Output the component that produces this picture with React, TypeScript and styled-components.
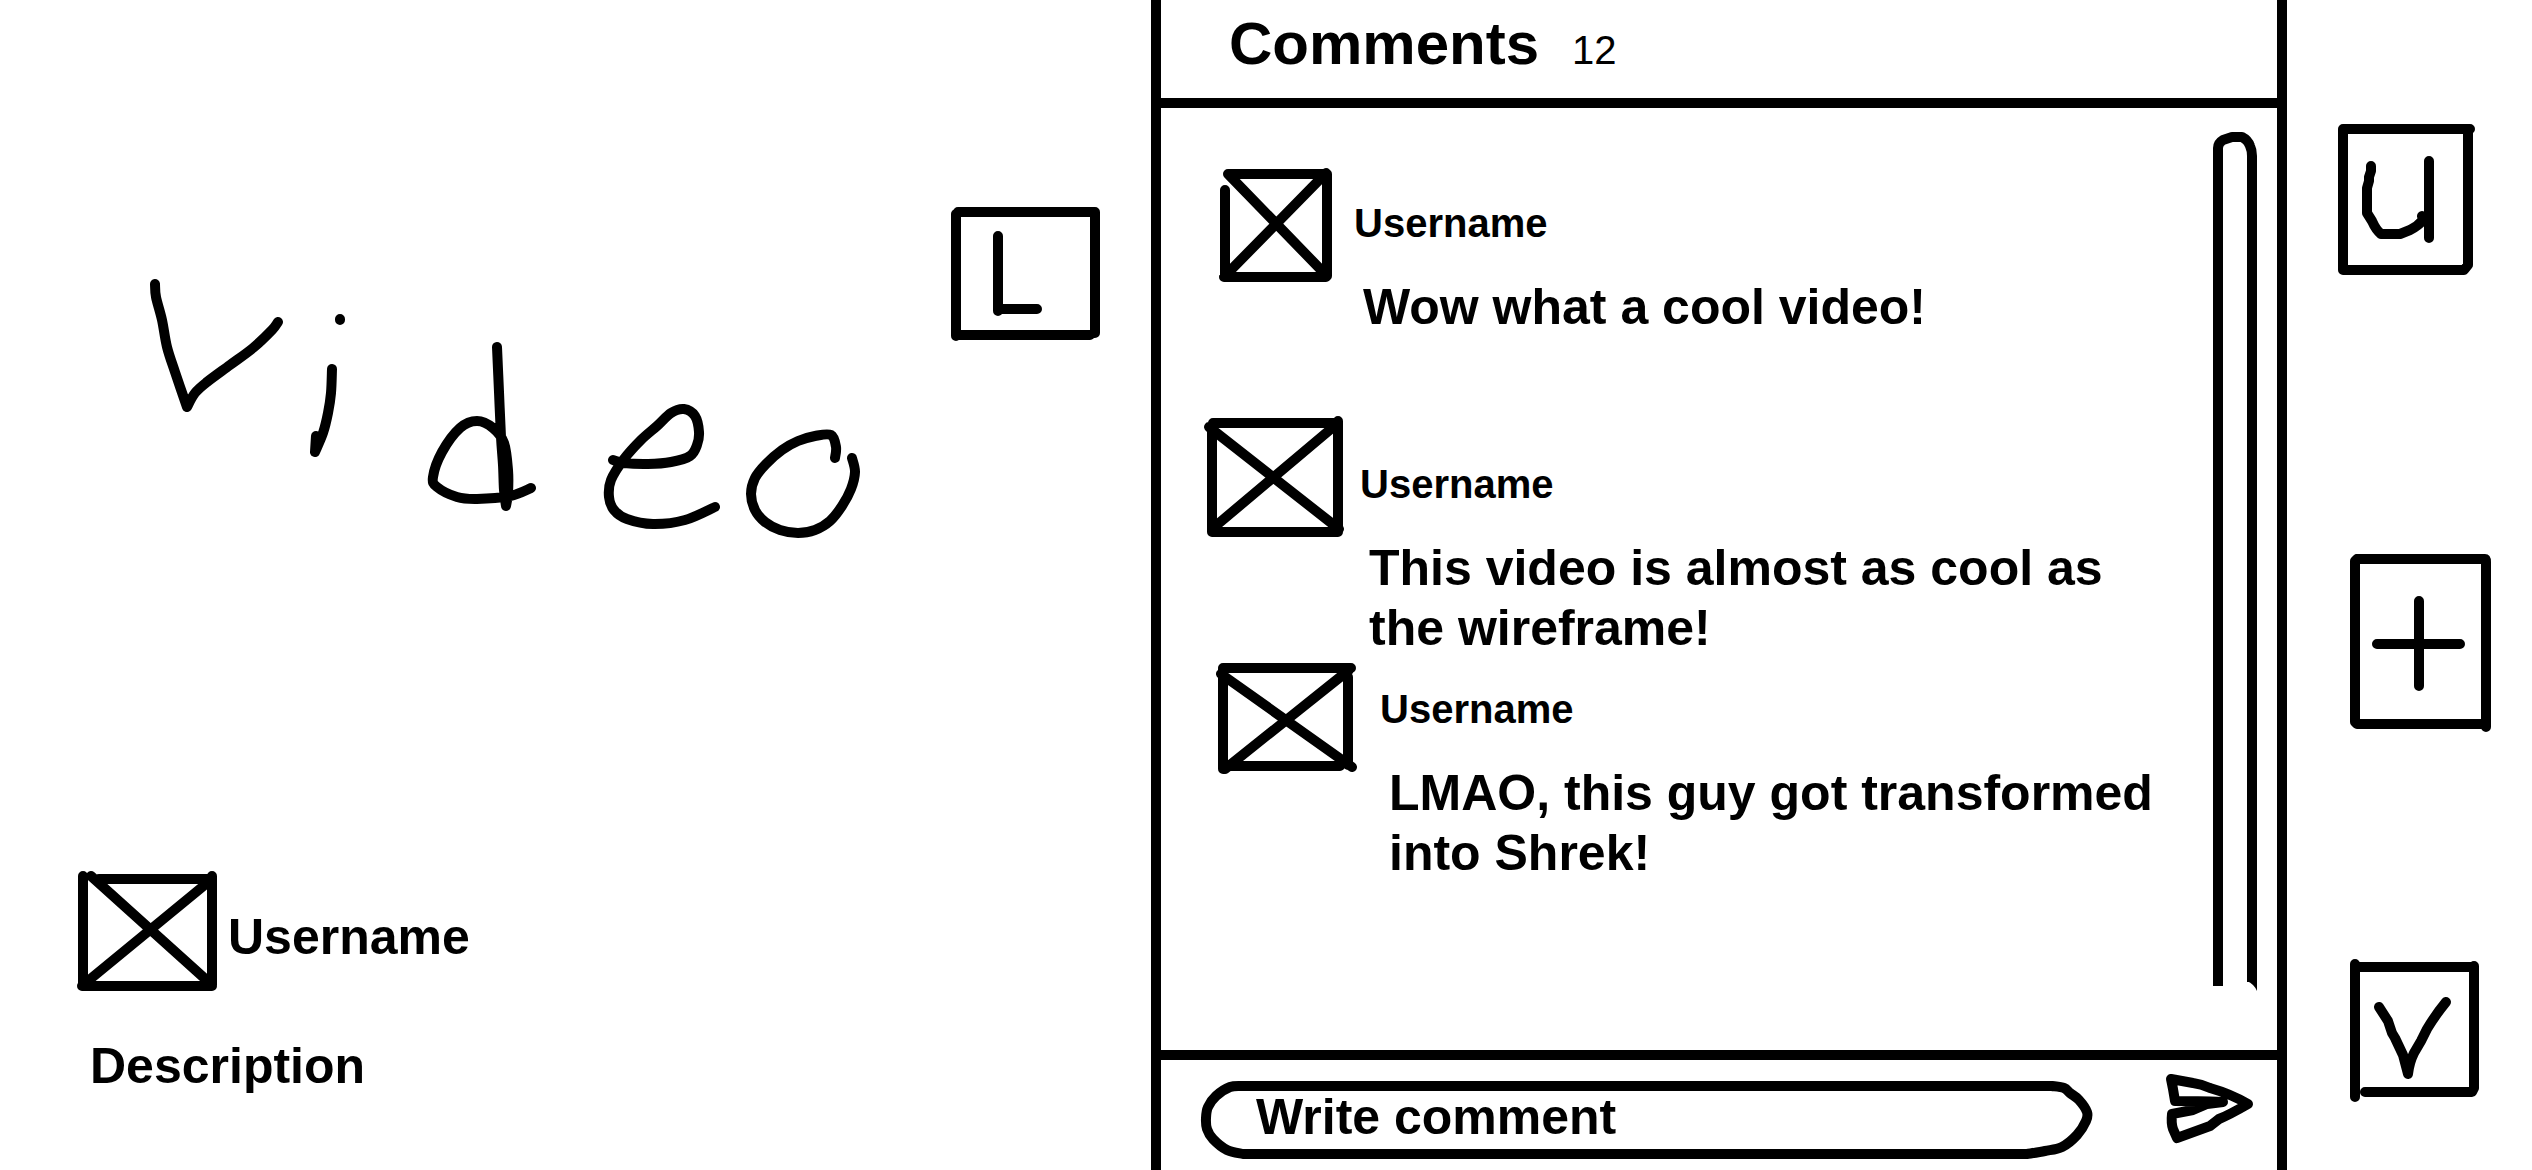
import React from "react";
import styled, { createGlobalStyle } from "styled-components";

const INK = "#000000";
const PAPER = "#ffffff";

const GlobalStyle = createGlobalStyle`
  *, *::before, *::after { box-sizing: border-box; }
  body {
    margin: 0;
    background: ${PAPER};
    color: ${INK};
    font-family: "Liberation Sans", Arial, Helvetica, sans-serif;
  }
`;

/* ---------- layout ---------- */

const Page = styled.div`
  display: grid;
  grid-template-columns: minmax(0, 1151fr) minmax(0, 1136fr) minmax(0, 245fr);
  min-height: 100vh;
`;

const Stage = styled.main`
  display: flex;
  flex-direction: column;
  justify-content: space-between;
  padding: 207px 50px 74px 77px;
`;

const StageTop = styled.div`
  display: flex;
  align-items: flex-start;
  justify-content: space-between;
  padding-left: 43px;
`;

const Wordmark = styled.h1`
  margin: 43px 0 0;
  line-height: 0;
`;

const Author = styled.div`
  display: flex;
  align-items: flex-start;
  gap: 9px;
`;

const AuthorName = styled.div`
  padding-top: 37px;
  font-size: 50px;
  line-height: 60px;
  font-weight: 700;
`;

const Description = styled.p`
  margin: 44px 0 0;
  padding-left: 13px;
  font-size: 50px;
  line-height: 60px;
  font-weight: 700;
`;

const Panel = styled.section`
  display: flex;
  flex-direction: column;
  border: solid ${INK};
  border-width: 0 10px;
`;

const PanelHeader = styled.header`
  display: flex;
  align-items: baseline;
  gap: 33px;
  padding: 9px 68px 19px;
  border-bottom: 10px solid ${INK};
`;

const PanelTitle = styled.h2`
  margin: 0;
  font-size: 60px;
  line-height: 70px;
  font-weight: 700;
`;

const Count = styled.span`
  font-size: 40px;
  line-height: 46px;
`;

const PanelBody = styled.div`
  display: flex;
  flex: 1;
  padding: 0 19px 0 43px;
`;

const CommentList = styled.ul`
  flex: 1;
  display: flex;
  flex-direction: column;
  gap: 4px;
  margin: 0;
  padding: 60px 40px 0 0;
  list-style: none;
`;

const CommentItem = styled.li<{ $indent: number }>`
  display: flex;
  align-items: flex-start;
  gap: 16px;
  min-height: 243px;
  padding-left: ${(p) => p.$indent}px;
`;

const CommentBody = styled.div<{ $drop: number }>`
  flex: 1;
  padding-top: ${(p) => p.$drop}px;
`;

const CommentAuthor = styled.div`
  font-size: 40px;
  line-height: 46px;
  font-weight: 700;
`;

const CommentText = styled.p`
  margin: 31px 0 0;
  padding-left: 9px;
  font-size: 50px;
  line-height: 60px;
  font-weight: 700;
`;

const ScrollTrack = styled.div`
  display: flex;
  width: 46px;
  padding: 23px 0 59px;
`;

const Composer = styled.form`
  display: flex;
  align-items: flex-start;
  gap: 73px;
  padding: 13px 22px 10px 39px;
  border-top: 10px solid ${INK};
`;

const Field = styled.label`
  display: grid;
  flex: 1;
  height: 87px;
  padding-top: 7px;

  & > * {
    grid-area: 1 / 1;
  }
`;

const FieldInput = styled.input`
  width: 100%;
  height: 80px;
  padding: 0 56px 6px;
  border: 0;
  outline: 0;
  background: transparent;
  color: ${INK};
  font: 700 50px/60px "Liberation Sans", Arial, Helvetica, sans-serif;

  &::placeholder {
    color: ${INK};
    opacity: 1;
  }
`;

const Rail = styled.nav`
  display: grid;
  grid-template-rows: auto 279fr auto 226fr auto;
  justify-items: start;
  padding: 123px 0 67px 51px;
`;

const SketchButton = styled.button<{ $row?: number; $shift?: number }>`
  grid-row: ${(p) => p.$row ?? "auto"};
  margin: 0 0 0 ${(p) => p.$shift ?? 0}px;
  padding: 0;
  border: 0;
  background: none;
  line-height: 0;
  cursor: pointer;
`;

const Ink = styled.svg`
  display: block;
  flex: none;
  overflow: visible;
  fill: none;
  stroke: ${INK};
  stroke-width: 10px;
  stroke-linecap: round;
  stroke-linejoin: round;
`;

const StretchInk = styled(Ink)<{ $butt?: boolean }>`
  width: 100%;
  height: 100%;
  stroke-linecap: ${(p) => (p.$butt ? "butt" : "round")};

  path {
    vector-effect: non-scaling-stroke;
  }
`;

const TornEdge = styled.path`
  fill: ${INK};
  stroke: none;
`;

/* ---------- drawings ---------- */

type Point = [number, number];

/* A pen stroke: a smooth curve through every point it is given. */
function pen(points: Point[]): string {
  let d = `M${points[0][0]} ${points[0][1]}`;
  for (let i = 0; i < points.length - 1; i++) {
    const a = points[Math.max(i - 1, 0)];
    const b = points[i];
    const c = points[i + 1];
    const e = points[Math.min(i + 2, points.length - 1)];
    d += `C${b[0] + (c[0] - a[0]) / 6} ${b[1] + (c[1] - a[1]) / 6} ${c[0] - (e[0] - b[0]) / 6} ${
      c[1] - (e[1] - b[1]) / 6
    } ${c[0]} ${c[1]}`;
  }
  return d;
}

type SketchProps = { w: number; h: number; d: string };

function Sketch({ w, h, d }: SketchProps) {
  return (
    <Ink width={w} height={h} viewBox={`0 0 ${w} ${h}`} aria-hidden="true">
      <path d={d} />
    </Ink>
  );
}

const wordmark = [
  pen([[35, 34], [36, 47], [42, 70], [47, 97], [55, 122], [67, 157]]),
  pen([[67, 157], [75, 143], [87, 132], [110, 115], [133, 98], [152, 80], [158, 72]]),
  "M220 69V70",
  pen([[212, 119], [211, 143], [208, 163], [203, 183], [195, 202]]),
  "M195 202L196 186",
  pen([[377, 97], [379, 142], [381, 187], [383, 215], [384, 240], [386, 256]]),
  pen([
    [386, 256], [388, 243], [388, 220], [384, 193], [373, 178], [357, 171], [340, 178],
    [322, 202], [313, 227], [317, 237], [337, 247], [357, 249], [390, 246], [411, 238],
  ]),
  pen([
    [493, 210], [504, 213], [528, 214], [551, 212], [570, 206], [577, 195], [579, 182],
    [575, 166], [564, 159], [551, 163], [537, 176], [521, 190], [504, 209], [491, 230],
    [489, 247], [494, 260], [507, 269], [533, 274], [565, 270], [595, 257],
  ]),
  pen([
    [715, 208], [716, 197], [711, 185], [695, 186], [678, 191], [662, 200], [646, 214],
    [635, 228], [631, 244], [635, 260], [645, 272], [660, 280], [678, 283], [695, 280],
    [710, 271], [722, 256], [731, 239], [735, 222], [732, 208],
  ]),
].join("");

const art = {
  author: {
    w: 142,
    h: 122,
    d: "M6 6V115M22 9H135M5 116H135M135 6V115M14 6L135 115M6 115L135 9",
  },
  first: {
    w: 120,
    h: 116,
    d: "M10 6H108M7 22V109M6 109H108M109 6V108M10 6L108 107M6 109L108 5",
  },
  second: {
    w: 140,
    h: 124,
    d: "M9 8H134M8 12V117M8 117H134M134 6V115M5 12L135 114M8 114L134 8",
  },
  third: {
    w: 149,
    h: 114,
    d: "M8 6H136M8 7V107M8 104H125M133 15V103M6 12L137 105M10 107L134 8",
  },
  left: {
    w: 150,
    h: 135,
    d: "M7 5H144M5 7V129M5 128H139M144 5V126M47 29V104M47 102H86",
  },
  up: {
    w: 138,
    h: 152,
    d: "M5 6H132M5 6V147M5 147H126L130 142V6M33 43V48L31 54V58L29 65V90L34 98Q38 107 43 111H62L72 107Q80 103 85 97L84 93M91 38V115",
  },
  plus: {
    w: 142,
    h: 179,
    d: "M7 5H135Q136 5 136 8V173M7 5L5 7V168L7 170H136M69 47V132M27 90H110",
  },
  down: {
    w: 130,
    h: 144,
    d: "M5 5V138M5 8H124M124 7V129L122 133H15M29 48L38 62L42 74L45 79L53 96L58 115C59 106 60 102 64 94L71 82L77 70C83 60 87 54 96 43",
  },
  send: {
    w: 90,
    h: 72,
    d: "M6 6L28 10Q36 11 45 15Q66 21 83 31Q64 42 54 46L45 53L12 65L8 56Q6 50 7 41L28 37L42 31L58 29Q32 28 10 28L8 16Z",
  },
};

const pill = `${pen([
  [852, 6], [864, 8], [870, 13], [879, 20], [887, 32], [886, 41], [877, 55], [862, 67], [845, 71], [827, 74],
])}H43${pen([
  [43, 74], [27, 70], [13, 59], [7, 49], [6, 38], [8, 27], [16, 16], [30, 7], [43, 6],
]).replace(/^M43 74/, "")}H852`;

/* ---------- content ---------- */

const comments = [
  { art: art.first, indent: 14, drop: 32, text: "Wow what a cool video!" },
  { art: art.second, indent: 0, drop: 46, text: "This video is almost as cool as the wireframe!" },
  { art: art.third, indent: 11, drop: 24, text: "LMAO, this guy got transformed into Shrek!" },
];

export default function App() {
  return (
    <>
      <GlobalStyle />
      <Page>
        <Stage>
          <StageTop>
            <Wordmark aria-label="Video">
              <Sketch w={760} h={310} d={wordmark} />
            </Wordmark>
            <SketchButton type="button" aria-label="Like">
              <Sketch {...art.left} />
            </SketchButton>
          </StageTop>
          <div>
            <Author>
              <Sketch {...art.author} />
              <AuthorName>Username</AuthorName>
            </Author>
            <Description>Description</Description>
          </div>
        </Stage>

        <Panel>
          <PanelHeader>
            <PanelTitle>Comments</PanelTitle>
            <Count>12</Count>
          </PanelHeader>
          <PanelBody>
            <CommentList>
              {comments.map((c) => (
                <CommentItem key={c.text} $indent={c.indent}>
                  <Sketch {...c.art} />
                  <CommentBody $drop={c.drop}>
                    <CommentAuthor>Username</CommentAuthor>
                    <CommentText>{c.text}</CommentText>
                  </CommentBody>
                </CommentItem>
              ))}
            </CommentList>
            <ScrollTrack>
              <StretchInk $butt viewBox="0 0 46 860" preserveAspectRatio="none" aria-hidden="true">
                <path d="M6 855V17Q6 12 11 9L20 6H30Q36 9 38 15Q40 19 40 25V851" />
                <TornEdge d="M35 840H45V860Q42 853 35 850Z" />
              </StretchInk>
            </ScrollTrack>
          </PanelBody>
          <Composer onSubmit={(e) => e.preventDefault()}>
            <Field>
              <StretchInk viewBox="0 0 892 80" preserveAspectRatio="none" aria-hidden="true">
                <path d={pill} />
              </StretchInk>
              <FieldInput type="text" placeholder="Write comment" aria-label="Write comment" />
            </Field>
            <SketchButton type="submit" aria-label="Send">
              <Sketch {...art.send} />
            </SketchButton>
          </Composer>
        </Panel>

        <Rail aria-label="Video navigation">
          <SketchButton type="button" aria-label="Up" $row={1}>
            <Sketch {...art.up} />
          </SketchButton>
          <SketchButton type="button" aria-label="Add" $row={3} $shift={12}>
            <Sketch {...art.plus} />
          </SketchButton>
          <SketchButton type="button" aria-label="Down" $row={5} $shift={12}>
            <Sketch {...art.down} />
          </SketchButton>
        </Rail>
      </Page>
    </>
  );
}
